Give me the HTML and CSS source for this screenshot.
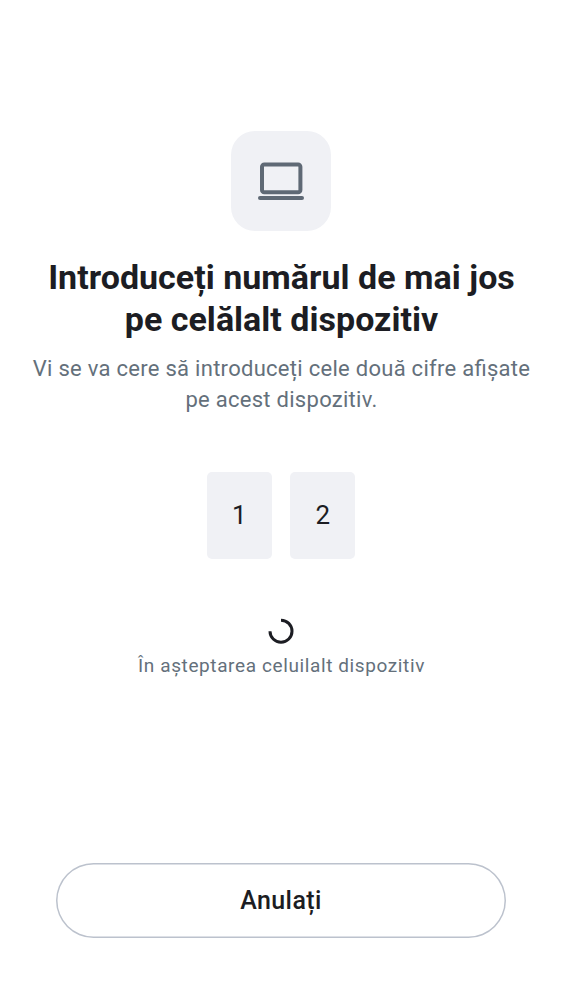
FILE: index.html
```
<!DOCTYPE html>
<html lang="ro">
<head>
<meta charset="utf-8">
<title>Introduceți numărul</title>
<link rel="stylesheet" href="styles.css">
</head>
<body>
<main class="screen">
  <div class="device">
    <svg class="device-icon" viewBox="0 0 100 100" fill="none" stroke="#5f6975" stroke-width="4">
      <rect x="31" y="33.4" width="38.4" height="27.8" rx="2.3"/>
      <path d="M29 67h42" stroke-linecap="round"/>
    </svg>
  </div>
  <h1 class="title"><span class="line">Introduceți numărul de mai jos</span><span class="line">pe celălalt dispozitiv</span></h1>
  <p class="subtitle"><span class="line">Vi se va cere să introduceți cele două cifre afișate</span><span class="line">pe acest dispozitiv.</span></p>
  <div class="digits">
    <div class="digit">1</div>
    <div class="digit">2</div>
  </div>
  <svg class="spinner" viewBox="0 0 28 28" fill="none" stroke="#1c1d23" stroke-width="3">
    <path d="M14 3.2a11 11 0 1 1-11 11"/>
  </svg>
  <p class="status">În așteptarea celuilalt dispozitiv</p>
  <button class="cancel">Anulați</button>
</main>
</body>
</html>
```
FILE: styles.css
```
body {
  margin: 0;
  background: #fff;
  font-family: Roboto, sans-serif;
  color: #1c1d23;
}
.screen {
  box-sizing: border-box;
  height: 1000px;
  padding: 131px 0 62.5px;
  display: flex;
  flex-direction: column;
  align-items: center;
}
.device {
  width: 100px;
  height: 100px;
  border-radius: 24px;
  background: #f0f1f5;
}
.device-icon { display: block; }
.line { display: block; white-space: nowrap; }
.title {
  margin: 25px 0 0;
  padding-left: 1px;
  font-size: 34px;
  line-height: 42px;
  font-weight: 700;
  letter-spacing: 0.02px;
  text-align: center;
}
.subtitle {
  margin: 13px 0 0;
  padding-left: 1px;
  font-size: 22px;
  line-height: 31px;
  letter-spacing: 0.28px;
  font-feature-settings: "liga" 1;
  text-align: center;
  color: #64707b;
}
.digits {
  display: flex;
  gap: 18.5px;
  margin-top: 57px;
}
.digit {
  width: 65px;
  height: 87px;
  border-radius: 5px;
  background: #f0f1f5;
  font-size: 26px;
  line-height: 87px;
  text-align: center;
}
.spinner {
  width: 28px;
  height: 28px;
  margin-top: 58px;
}
.status {
  margin: 8px 0 0;
  padding-left: 1px;
  font-size: 19px;
  line-height: 26px;
  letter-spacing: 0.61px;
  color: #64707b;
}
.cancel {
  width: 450px;
  height: 75px;
  margin-top: auto;
  padding: 1px 0 0;
  border: 0;
  border-radius: 38px;
  background: #fff;
  box-shadow: inset 0 0 0 1.5px #bcc2cd;
  font: 500 25px/74px Roboto, sans-serif;
  letter-spacing: 0.4px;
  color: #1c1d23;
}
```
